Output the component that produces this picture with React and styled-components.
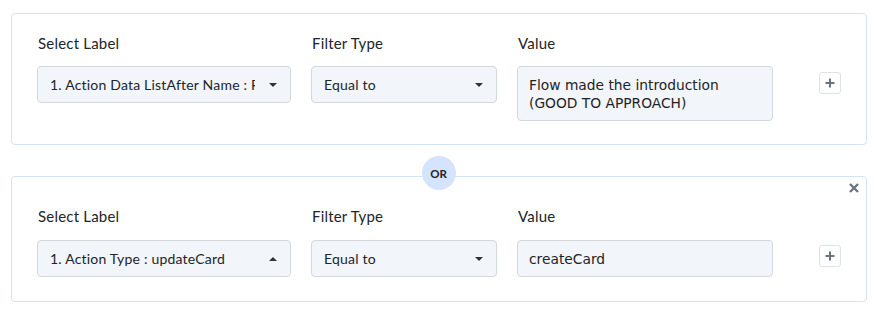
import React from "react";
import styled, { createGlobalStyle } from "styled-components";

const Global = createGlobalStyle`
  html, body { margin: 0; padding: 0; background: #ffffff; }
  body { font-family: Lato, "Open Sans", sans-serif; color: #212529; }
`;

const Page = styled.div`
  width: 877px;
  padding: 13px 10px 0 11px;
  box-sizing: border-box;
`;

const Card = styled.div`
  position: relative;
  border: 1px solid #d5e3f6;
  border-radius: 4px;
  padding: ${(p) => (p.$closable ? "29px" : "19px")} 25px ${(p) => (p.$closable ? "24px" : "23px")} 25px;
  display: flex;
  align-items: flex-start;
`;

const Field = styled.div`
  display: flex;
  flex-direction: column;
  width: ${(p) => p.$w}px;
  margin-right: ${(p) => p.$gap || 0}px;
`;

const Label = styled.div`
  font-size: 15px;
  letter-spacing: 0.2px;
  line-height: 20px;
  margin-bottom: ${(p) => (p.$wide ? 14 : 13)}px;
  padding-left: 1px;
`;

const SelectBox = styled.div`
  height: 37px;
  box-sizing: border-box;
  border: 1px solid #d3d8de;
  border-radius: 4px;
  background: #f2f5f9;
  display: flex;
  align-items: center;
  padding: 0 13px 0 12px;
  font-size: 14px;
  letter-spacing: 0.2px;
  white-space: nowrap;
  overflow: hidden;
`;

const SelectText = styled.span`
  flex: 1;
  overflow: hidden;
  text-overflow: clip;
  white-space: nowrap;
`;

const Caret = styled.span`
  width: 0;
  height: 0;
  border-left: 4px solid transparent;
  border-right: 4px solid transparent;
  ${(p) => (p.$up ? "border-bottom: 4px solid #333;" : "border-top: 4px solid #333;")}
  margin-left: 14px;
  flex-shrink: 0;
`;

const ValueBox = styled.div`
  box-sizing: border-box;
  min-height: 37px;
  border: 1px solid #d3d8de;
  border-radius: 4px;
  background: #f2f5f9;
  padding: 9px 12px 8px 11px;
  font-family: "DejaVu Sans", Verdana, sans-serif;
  font-size: 13.8px;
  line-height: 18px;
  color: #1f2327;
`;

const PlusCell = styled.div`
  flex: 1;
  display: flex;
  justify-content: flex-end;
  padding-top: 39px;
`;

const PlusButton = styled.div`
  width: 22px;
  height: 22px;
  box-sizing: border-box;
  border: 1px solid #dde2e7;
  border-radius: 3px;
  display: flex;
  align-items: center;
  justify-content: center;
  background: #fff;
`;

const CloseButton = styled.div`
  position: absolute;
  top: 6px;
  right: 7px;
  width: 10px;
  height: 10px;
  display: flex;
`;

const Divider = styled.div`
  height: 31px;
  display: flex;
  justify-content: center;
  align-items: flex-end;
  padding-right: 1px;
`;

const OrBadge = styled.div`
  position: relative;
  z-index: 2;
  width: 34px;
  height: 34px;
  border-radius: 50%;
  background: #d4e4fc;
  margin-bottom: -14px;
  display: flex;
  align-items: center;
  justify-content: center;
  font-size: 11.5px;
  font-weight: 700;
  color: #222;
`;

const PlusIcon = () => (
  <svg width="10" height="10" viewBox="0 0 10 10">
    <path d="M5 0.5v9M0.5 5h9" stroke="#6b7580" strokeWidth="2" />
  </svg>
);

const CloseIcon = () => (
  <svg width="10" height="10" viewBox="0 0 10 10">
    <path d="M1 1l8 8M9 1l-8 8" stroke="#6b7580" strokeWidth="2.4" />
  </svg>
);

const Condition = ({ label, filter, value, up, closable }) => (
  <Card $closable={closable}>
    {closable && (
      <CloseButton>
        <CloseIcon />
      </CloseButton>
    )}
    <Field $w={254} $gap={20}>
      <Label $wide={closable}>Select Label</Label>
      <SelectBox>
        <SelectText>{label}</SelectText>
        <Caret $up={up} />
      </SelectBox>
    </Field>
    <Field $w={186} $gap={20}>
      <Label $wide={closable}>Filter Type</Label>
      <SelectBox>
        <SelectText>{filter}</SelectText>
        <Caret />
      </SelectBox>
    </Field>
    <Field $w={256}>
      <Label $wide={closable}>Value</Label>
      <ValueBox>{value}</ValueBox>
    </Field>
    <PlusCell>
      <PlusButton>
        <PlusIcon />
      </PlusButton>
    </PlusCell>
  </Card>
);

export default function App() {
  return (
    <>
      <Global />
      <Page>
        <Condition
          label="1. Action Data ListAfter Name : Flow made the introduction"
          filter="Equal to"
          value={
            <>
              Flow made the introduction
              <br />
              (GOOD TO APPROACH)
            </>
          }
        />
        <Divider>
          <OrBadge>OR</OrBadge>
        </Divider>
        <Condition
          closable
          up
          label="1. Action Type : updateCard"
          filter="Equal to"
          value="createCard"
        />
      </Page>
    </>
  );
}
